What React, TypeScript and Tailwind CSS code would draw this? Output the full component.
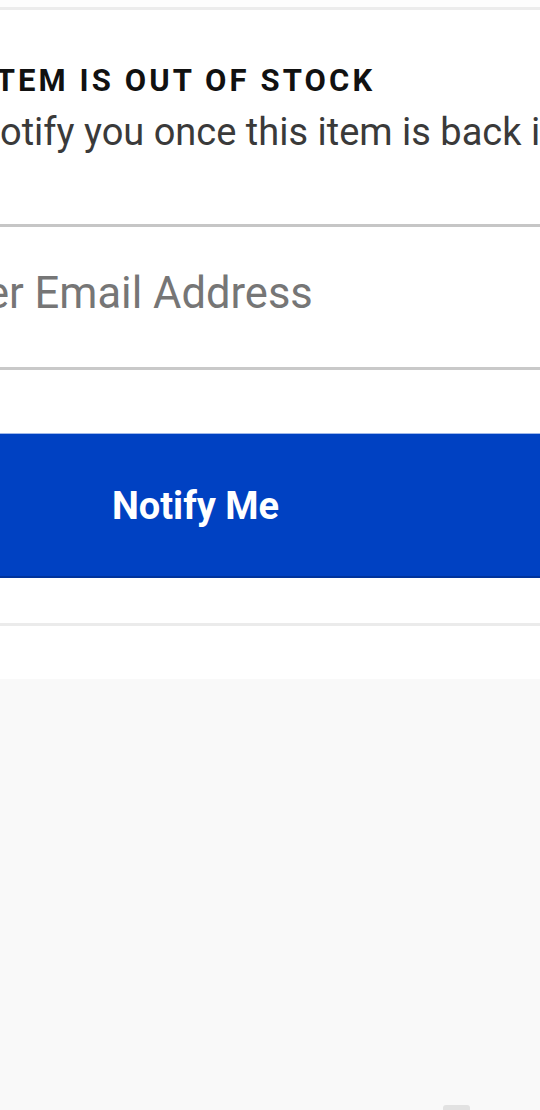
import React from "react";

export default function App() {
  return (
    <div
      className="w-[540px] h-[1110px] overflow-hidden bg-white flex flex-col"
      style={{ fontFamily: "Roboto, 'Noto Sans', Arial, sans-serif" }}
    >
      <div className="h-[7px] bg-[#fdfdfd]" />
      <div className="h-[3px] bg-[#ececec]" />
      <div className="h-[214px] flex flex-col pt-[55px]">
        <div className="ml-[-16px] whitespace-nowrap text-[31px] leading-[31px] font-bold tracking-[3.1px] text-[#111111]">
          ITEM IS OUT OF STOCK
        </div>
        <div className="mt-[17px] ml-[-21px] whitespace-nowrap text-[38px] leading-[38px] text-[#3a3a3a]">
          notify you once this item is back in stock.
        </div>
      </div>
      <div className="h-[3px] bg-[#c6c6c6]" />
      <div className="h-[140px] flex flex-col pt-[45px]">
        <div className="ml-[-77px] whitespace-nowrap text-[43.5px] leading-[44px] text-[#767676]">
          Enter Email Address
        </div>
      </div>
      <div className="h-[3px] bg-[#c9c9c9]" />
      <div className="h-[63px]" />
      <div className="h-[145px] bg-[#0041c2] border-t border-t-[#9fb8ea] border-b-2 border-b-[#00339c] flex flex-col pt-[53px] pl-[112px]">
        <span className="text-[38px] leading-[38px] font-bold text-white whitespace-nowrap">
          Notify Me
        </span>
      </div>
      <div className="h-[45px]" />
      <div className="h-[3px] bg-[#ebebeb]" />
      <div className="h-[53px]" />
      <div className="flex-1 bg-[#f9f9f9] flex flex-col justify-end items-start pl-[443px]">
        <div className="w-[27px] h-[5px] rounded-t-[3px] bg-[#e2e2e2]" />
      </div>
    </div>
  );
}
